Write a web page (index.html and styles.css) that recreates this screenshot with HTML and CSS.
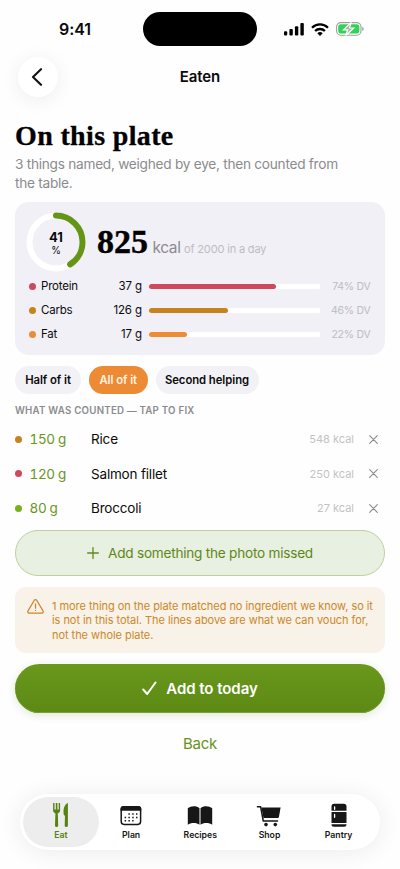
FILE: index.html
```
<!DOCTYPE html>
<html lang="en">
<head>
<meta charset="utf-8">
<meta name="viewport" content="width=device-width, initial-scale=1">
<title>Eaten</title>
<link rel="stylesheet" href="styles.css">
</head>
<body>
<div class="screen">
  <div class="status">
    <div class="clock">9:41</div>
    <div class="island"></div>
    <div class="signals">
      <svg width="20" height="13" viewBox="0 0 20 13"><rect x="0" y="8.2" width="3.2" height="4.3" rx="1"/><rect x="5.4" y="6" width="3.4" height="6.5" rx="1"/><rect x="10.9" y="3.2" width="3.4" height="9.3" rx="1"/><rect x="16.4" y="0" width="3.4" height="12.5" rx="1"/></svg>
      <svg width="18" height="13" viewBox="0 0 18 13"><g fill="none" stroke="#000" stroke-width="2.3"><path d="M1 4.7a11.4 11.4 0 0 1 16 0"/><path d="M4.1 8a7 7 0 0 1 9.8 0"/></g><path d="M6.3 10.2a4 4 0 0 1 5.4 0L9 12.9z"/></svg>
      <svg width="28" height="14" viewBox="0 0 28 14"><rect x=".6" y=".6" width="24.4" height="12.6" rx="4.2" fill="#fff" stroke="#9b9f9c" stroke-width="1.1"/><rect x="2.2" y="2.2" width="21.2" height="9.4" rx="2.8" fill="#34d058"/><path d="M26.3 4.8c1.8.7 1.8 3.5 0 4.2z" fill="#999"/><path d="M15.3 .4 7.5 7.8h4.3L9.7 13.5 17.8 6h-4.4z" fill="#a8aaa8" stroke="#fff" stroke-width="1.2"/></svg>
    </div>
  </div>
  <header class="nav">
    <div class="round"><svg width="12" height="18" viewBox="0 0 12 18"><path d="M10 1.2 2 9l8 7.8" fill="none" stroke="#111" stroke-width="2.1" stroke-linecap="round" stroke-linejoin="round"/></svg></div>
    <div class="navtitle">Eaten</div>
  </header>
  <main>
    <h1>On this plate</h1>
    <p class="sub">3 things named, weighed by eye, then counted from<br>the table.</p>
    <section class="card">
      <div class="summary">
        <div class="ring">
          <svg width="60" height="60" viewBox="0 0 60 60"><circle cx="30" cy="30" r="26.5" fill="none" stroke="#fff" stroke-width="6"/><circle cx="30" cy="30" r="26.5" fill="none" stroke="#659516" stroke-width="6" stroke-linecap="round" pathLength="100" stroke-dasharray="41 100" transform="rotate(-90 30 30)"/></svg>
          <div class="ringtext"><b>41</b><span>%</span></div>
        </div>
        <div class="total"><span class="big">825</span><span class="kcal">kcal</span><span class="of">of 2000 in a day</span></div>
      </div>
      <div class="macro protein"><i class="dot"></i><span class="name">Protein</span><span class="amt">37 g</span><div class="track"><div class="fill" style="width:74%"></div></div><span class="dv">74% DV</span></div>
      <div class="macro carbs"><i class="dot"></i><span class="name">Carbs</span><span class="amt">126 g</span><div class="track"><div class="fill" style="width:46%"></div></div><span class="dv">46% DV</span></div>
      <div class="macro fat"><i class="dot"></i><span class="name">Fat</span><span class="amt">17 g</span><div class="track"><div class="fill" style="width:22%"></div></div><span class="dv">22% DV</span></div>
    </section>
    <div class="chips"><div class="chip half">Half of it</div><div class="chip all">All of it</div><div class="chip second">Second helping</div></div>
    <h2>WHAT WAS COUNTED — TAP TO FIX</h2>
    <div class="items">
      <div class="item carbs"><i class="dot"></i><span class="grams">150 g</span><span class="food">Rice</span><span class="cal">548 kcal</span><svg width="9" height="9" viewBox="0 0 9 9"><path d="M.7.7l7.6 7.6M8.3.7.7 8.3"/></svg></div>
      <div class="item protein"><i class="dot"></i><span class="grams">120 g</span><span class="food">Salmon fillet</span><span class="cal">250 kcal</span><svg width="9" height="9" viewBox="0 0 9 9"><path d="M.7.7l7.6 7.6M8.3.7.7 8.3"/></svg></div>
      <div class="item veg"><i class="dot"></i><span class="grams">80 g</span><span class="food">Broccoli</span><span class="cal">27 kcal</span><svg width="9" height="9" viewBox="0 0 9 9"><path d="M.7.7l7.6 7.6M8.3.7.7 8.3"/></svg></div>
    </div>
    <div class="missed"><svg width="12" height="12" viewBox="0 0 12 12"><path d="M6 .6v10.8M.6 6h10.8" stroke="#63891f" stroke-width="1.3" stroke-linecap="round"/></svg><span>Add something the photo missed</span></div>
    <div class="warning">
      <svg width="17" height="15" viewBox="0 0 17 15" fill="none" stroke="#cc8526" stroke-width="1.2" stroke-linecap="round" stroke-linejoin="round"><path d="M7.3 1.3a1.4 1.4 0 0 1 2.4 0l6.3 10.6a1.4 1.4 0 0 1-1.2 2.2H2.2A1.4 1.4 0 0 1 1 11.9z"/><path d="M8.5 4.9v4.3M8.5 11.3v.2"/></svg>
      <p>1 more thing on the plate matched no ingredient we know, so it<br>is not in this total. The lines above are what we can vouch for,<br>not the whole plate.</p>
    </div>
    <div class="primary"><svg width="15" height="15" viewBox="0 0 15 15"><path d="M1.2 8.5 5.2 13 13.5 1.5" fill="none" stroke="#fff" stroke-width="2" stroke-linecap="round" stroke-linejoin="round"/></svg><span>Add to today</span></div>
    <div class="back">Back</div>
  </main>
  <nav class="tabs">
    <div class="tab active"><svg width="24" height="26" viewBox="0 0 24 26"><path d="M4.1 1v7.2c0 1.9 1 2.7 2.300 3.100L6 23.500a1.600 1.600 0 0 0 3.200 0L8.800 11.300c1.300-.4 2.300-1.200 2.300-3.100V1H9.700v6.500H8.400V1H6.800v6.500H5.500V1zM18.900 1c-2.200.6-4.400 4.300-4.400 8.300 0 2 .2 3.700.8 4.300h.7l-.3 9.900a1.600 1.600 0 0 0 3.200 0z"/></svg><span>Eat</span></div>
    <div class="tab"><svg width="24" height="26" viewBox="0 0 24 26"><rect x="2.2" y="4.8" width="19.4" height="17.6" rx="2.8" fill="none" stroke="#171717" stroke-width="1.5"/><path d="M1.5 8.8V7a3 3 0 0 1 3-3h14.800a3 3 0 0 1 3 3v1.800z"/><g fill="none" stroke="#171717" stroke-width="1.5" stroke-dasharray="1.500 2.300"><path d="M9.400 12h9"/><path d="M5.600 15.400h13"/><path d="M5.600 18.800h9"/></g></svg><span>Plan</span></div>
    <div class="tab"><svg width="26" height="26" viewBox="0 0 26 26"><path d="M12.500 6.300C11 4.700 8.900 4.200 6.800 4.200 4.500 4.200 2.300 4.900.8 6.200v16.500c1.500-1.200 3.500-1.800 6-1.800 2.200 0 4.200.6 5.700 1.900zM13.500 6.300c1.500-1.600 3.600-2.100 5.700-2.100 2.300 0 4.500.7 6 2v16.500c-1.500-1.200-3.500-1.800-6-1.800-2.200 0-4.200.6-5.700 1.900z"/></svg><span>Recipes</span></div>
    <div class="tab"><svg width="26" height="26" viewBox="0 0 26 26"><path d="M5.400 5.500h19.200l-1.700 9.400a1.700 1.700 0 0 1-1.600 1.200H7.500z"/><path d="M1.400 4.700h3.200L7.300 19h14.200" fill="none" stroke="#171717" stroke-width="1.500" stroke-linecap="round" stroke-linejoin="round"/><circle cx="10" cy="22.600" r="1.800"/><circle cx="19.300" cy="22.600" r="1.800"/></svg><span>Shop</span></div>
    <div class="tab"><svg width="24" height="26" viewBox="0 0 24 26"><path d="M4.500 8.800V4.400a2.700 2.700 0 0 1 2.700-2.700h9.600a2.700 2.700 0 0 1 2.700 2.700v4.400zM4.500 10.100h15v10.800h-15zM4.500 22.200h15a2.500 2.500 0 0 1-2.500 2.500H7a2.500 2.500 0 0 1-2.500-2.500z"/><path d="M7.600 4.800v2.500M7.600 12.300v3" stroke="#fff" stroke-width="1.300" stroke-linecap="round"/></svg><span>Pantry</span></div>
  </nav>
</div>
</body>
</html>
```
FILE: styles.css
```
* { box-sizing: border-box; }
body { margin: 0; background: #fefefe; font-family: Inter, "Liberation Sans", sans-serif; color: #0b0b0c; }
h1, h2, p { margin: 0; font-weight: 400; }
svg { display: block; flex: none; }
span { white-space: nowrap; }
.screen { width: 400px; height: 869px; overflow: hidden; display: flex; flex-direction: column; }
.status { height: 57px; flex: none; display: grid; grid-template-columns: 143px 114px 143px; padding-top: 12px; align-items: start; }
.clock { padding-left: 59px; font-size: 16px; font-weight: 600; line-height: 35px; letter-spacing: -.1px; }
.island { height: 34px; border-radius: 17px; background: #000; }
.signals { display: flex; align-items: center; height: 34px; padding-left: 27px; gap: 7px; }
.nav { height: 40px; flex: none; display: grid; grid-template-columns: 100px 200px 100px; align-items: center; }
.round { width: 40px; height: 40px; margin-left: 18px; border-radius: 50%; background: #fff; display: flex; align-items: center; justify-content: center; padding-right: 2px; box-shadow: 0 3px 20px rgba(0,0,0,.07); }
.navtitle { text-align: center; font-size: 15px; font-weight: 600; letter-spacing: -.1px; padding-bottom: 1px; }
main { padding: 23px 15px 0; flex: 1; }
h1 { font: 700 28px/32px "Liberation Serif", serif; letter-spacing: .35px; color: #000; -webkit-text-stroke: .3px #000; }
.sub { margin-top: 3px; font-size: 13.7px; line-height: 18.5px; color: #8b8b8e; letter-spacing: -.28px; white-space: nowrap; }
.card { margin-top: 9.5px; height: 153.5px; background: #f1f0f6; border-radius: 14px; padding: 10.5px 14.5px 0 11px; }
.summary { display: flex; height: 62px; }
.ring { display: grid; width: 60px; height: 60px; }
.ring > * { grid-area: 1 / 1; }
.ringtext { display: flex; flex-direction: column; align-items: center; padding-top: 17px; line-height: 12px; font-size: 9.8px; }
.ringtext b { font-size: 13px; line-height: 16px; font-weight: 700; }
.total { display: flex; align-items: baseline; height: 60px; padding-left: 11px; line-height: 60px; }
.big { font-family: "Liberation Serif", serif; font-weight: 700; font-size: 34px; color: #000; -webkit-text-stroke: .4px #000; }
.kcal { margin-left: 4.5px; font-size: 15.5px; letter-spacing: -.4px; color: #8b8b90; }
.of { margin-left: 3.5px; font-size: 11px; letter-spacing: -.16px; color: #bdbcc3; }
.macro { display: flex; align-items: center; height: 24px; font-size: 11.5px; padding-left: 3px; }
.dot { flex: none; width: 7px; height: 7px; border-radius: 50%; background: var(--c); }
.protein { --c: #cf485b; }
.carbs { --c: #c68320; }
.fat { --c: #ee8c36; }
.veg { --c: #75b21c; }
.name { width: 50px; margin-left: 5px; letter-spacing: -.2px; }
.amt { width: 51px; text-align: right; letter-spacing: -.1px; }
.track { width: 171px; height: 5px; margin-left: 7px; background: #fff; border-radius: 1px; flex: none; }
.fill { height: 5px; border-radius: 3px; background: var(--c); }
.dv { margin-left: auto; font-size: 10.5px; letter-spacing: -.25px; color: #bdbcc3; }
.chips { display: flex; gap: 7.5px; margin-top: 11px; }
.chip { height: 27.5px; border-radius: 14px; display: flex; align-items: center; justify-content: center; background: #f2f1f6; font-size: 11.3px; font-weight: 600; letter-spacing: -.05px; white-space: nowrap; }
.half { width: 66px; }
.all { width: 59.5px; background: #ed8b34; color: #fff3e4; }
.second { width: 103px; }
h2 { margin-top: 9px; font-size: 9.7px; line-height: 15px; font-weight: 600; letter-spacing: .24px; color: #8b8b8f; white-space: nowrap; }
.items { margin-top: 4.5px; }
.item { height: 34.5px; display: flex; align-items: center; font-size: 13.5px; }
.item svg { stroke: #8a8a8d; stroke-width: 1.1; stroke-linecap: round; margin-right: 7px; }
.grams { width: 62px; margin-left: 7.5px; color: #6a961e; font-variant-numeric: tabular-nums; letter-spacing: -.35px; }
.food { flex: 1; margin-left: -.5px; letter-spacing: -.18px; }
.cal { margin-right: 15px; font-size: 11px; color: #c3c3c5; }
.missed { margin-top: 4.5px; height: 45.5px; border: 1px solid #bed0a0; border-radius: 23px; background: #e8f0e1; color: #5e8718; display: flex; align-items: center; justify-content: center; gap: 9px; font-size: 13.6px; letter-spacing: -.23px; }
.warning { margin-top: 11.5px; height: 65.5px; border-radius: 11px; background: #f8f2e8; color: #cc8829; display: flex; padding: 11.5px 12px; gap: 8px; }
.warning p { font-size: 11px; line-height: 14.5px; letter-spacing: -.05px; white-space: nowrap; }
.primary { margin-top: 11px; height: 49px; border-radius: 25px; background: linear-gradient(#6a981e, #5b8912); box-shadow: 0 2px 9px rgba(80,110,30,.17), inset 0 -1px #78a137; color: #fff; display: flex; align-items: center; justify-content: center; gap: 9px; font-size: 15px; font-weight: 600; letter-spacing: -.05px; }
.back { text-align: center; margin-top: 20px; line-height: 22px; font-size: 15px; letter-spacing: -.25px; color: #67931d; }
.tabs { flex: none; display: grid; grid-template-columns: 73.5px repeat(4, 69.2px); width: 360px; height: 56px; margin: 0 20px 19px; padding: 3px; border-radius: 28px; background: #fff; box-shadow: 0 2px 24px rgba(0,0,0,.08); }
.tab { display: flex; flex-direction: column; align-items: center; height: 50px; padding-top: 5px; font-size: 8.7px; font-weight: 600; line-height: 12px; color: #171717; fill: #171717; }
.tab svg { margin-bottom: 1px; }
.active { width: 76px; border-radius: 25px; background: #ededed; color: #568313; fill: #568313; }
```
